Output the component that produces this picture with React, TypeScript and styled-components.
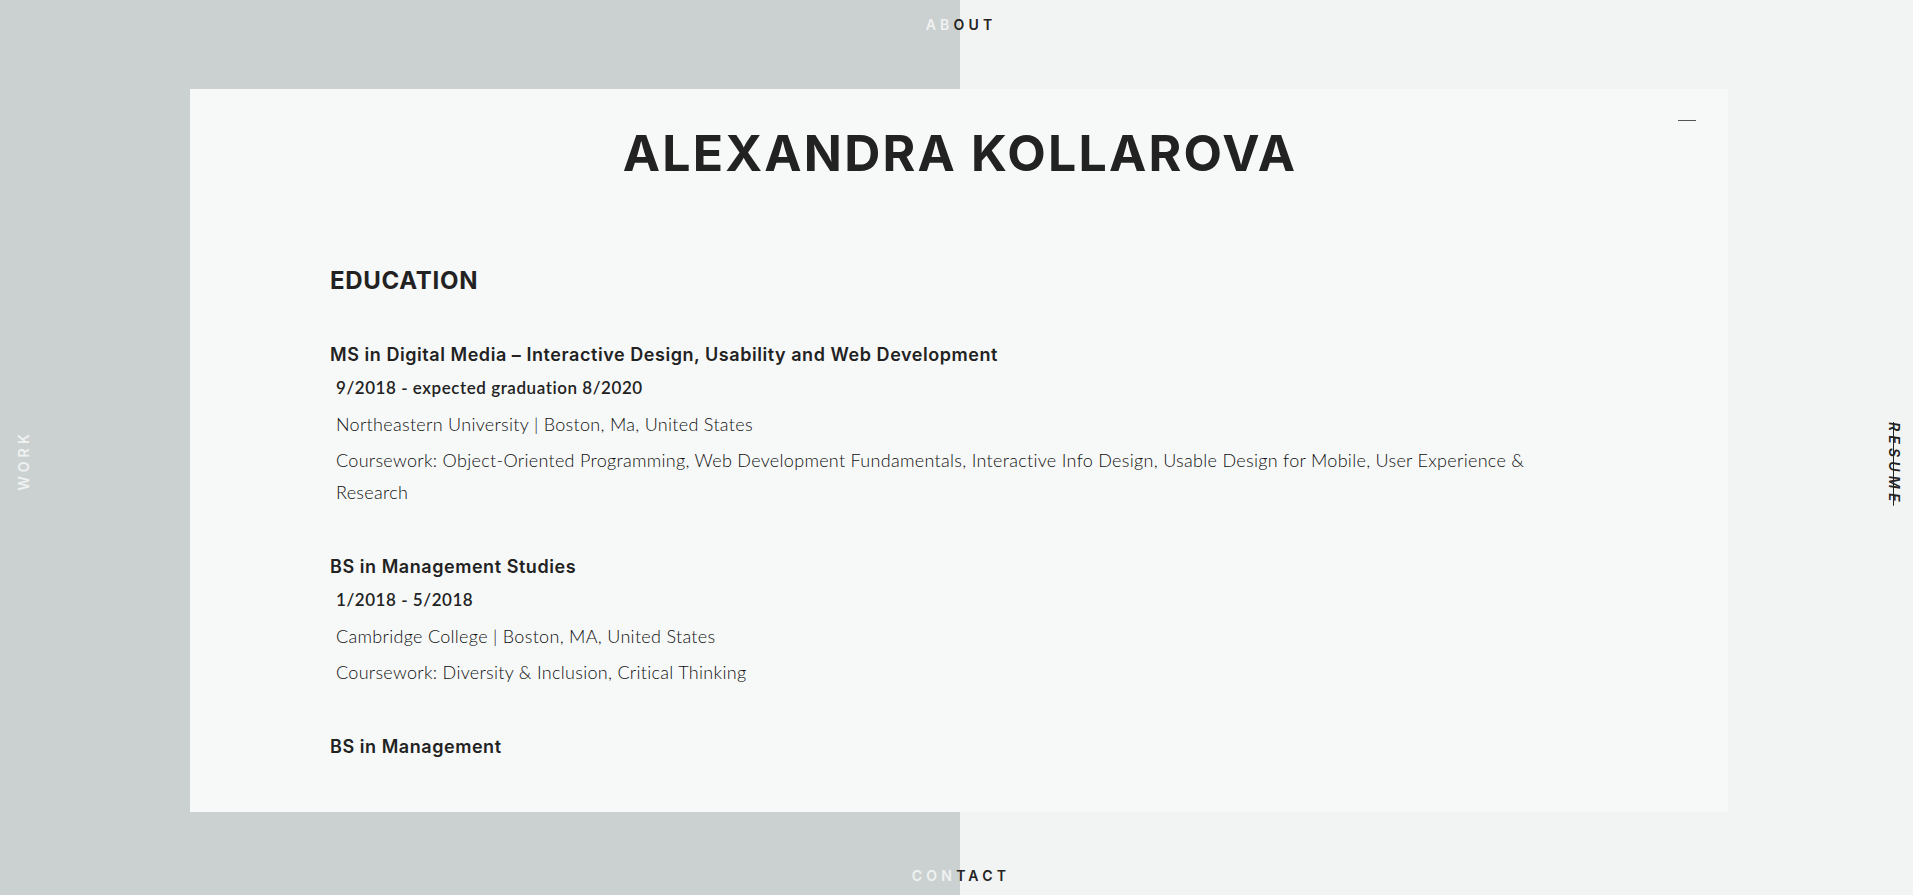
import React from "react";
import styled, { createGlobalStyle } from "styled-components";

const GlobalStyle = createGlobalStyle`
  html, body {
    margin: 0;
    padding: 0;
    height: 100%;
    overflow: hidden;
  }
  body {
    background: linear-gradient(to right, #cbd1d1 0, #cbd1d1 960px, #f2f3f3 960px, #f2f3f3 100%);
    font-family: "Lato", "Liberation Sans", sans-serif;
    -webkit-font-smoothing: antialiased;
  }
`;

const Page = styled.div`
  display: grid;
  grid-template-columns: 190px 1538px 1fr;
  grid-template-rows: 89px 723px 1fr;
  height: 100vh;
`;

const TopNav = styled.nav<{ $row: number; $pad: number }>`
  grid-column: 2;
  grid-row: ${(p) => p.$row};
  justify-self: center;
  padding-top: ${(p) => p.$pad}px;
  padding-left: 4px;
`;

const SideNav = styled.nav<{ $side: "left" | "right"; $offset: number }>`
  grid-row: 1 / 4;
  grid-column: ${(p) => (p.$side === "left" ? 1 : 3)};
  display: flex;
  align-items: center;
  justify-content: ${(p) => (p.$side === "left" ? "flex-start" : "flex-end")};
  padding-top: ${(p) => p.$offset}px;
  padding-left: ${(p) => (p.$side === "left" ? 17 : 0)}px;
  padding-right: ${(p) => (p.$side === "right" ? 12 : 0)}px;
`;

const NavLink = styled.a<{ $vertical?: "up" | "down"; $active?: boolean }>`
  font-family: "Inter", "Liberation Sans", sans-serif;
  font-weight: 600;
  font-size: 14px;
  line-height: 14px;
  letter-spacing: 4.2px;
  text-transform: uppercase;
  color: #222;
  text-decoration: ${(p) => (p.$active ? "line-through" : "none")};
  font-style: ${(p) => (p.$active ? "italic" : "normal")};
  cursor: pointer;
  writing-mode: ${(p) => (p.$vertical ? "vertical-rl" : "horizontal-tb")};
  transform: ${(p) => (p.$vertical === "up" ? "rotate(180deg)" : "none")};
`;

const Light = styled.span`
  color: #f0f2f2;
`;

const Card = styled.section`
  grid-column: 2;
  grid-row: 2;
  position: relative;
  background: #f7f9f9;
  display: flex;
  flex-direction: column;
  padding-top: 39px;
  box-sizing: border-box;
`;

const MinimizeButton = styled.button`
  position: absolute;
  top: 25px;
  right: 28px;
  padding: 6px 4px;
  border: none;
  background: transparent;
  cursor: pointer;
  display: flex;
`;

const Dash = styled.span`
  display: block;
  width: 18px;
  height: 1px;
  background: #555;
`;

const Name = styled.h1`
  margin: 0;
  padding-left: 2px;
  text-align: center;
  font-family: "Inter", "Liberation Sans", sans-serif;
  font-weight: 700;
  font-size: 50px;
  line-height: 1;
  letter-spacing: 2.2px;
  color: #222;
`;

const ScrollArea = styled.div`
  margin: 87px 99px 0 140px;
  height: 500px;
  overflow-y: scroll;
  padding-right: 30px;

  &::-webkit-scrollbar {
    width: 10px;
  }
  &::-webkit-scrollbar-track {
    background: #f2f3f3;
  }
  &::-webkit-scrollbar-thumb {
    background: #f2f3f3;
  }
`;

const ResumeSection = styled.section`
  display: flex;
  flex-direction: column;
  gap: 45px;
`;

const SectionTitle = styled.h2`
  margin: 0;
  font-family: "Inter", "Liberation Sans", sans-serif;
  font-weight: 700;
  font-size: 24px;
  line-height: 31px;
  letter-spacing: 0.7px;
  color: #222;
`;

const Degree = styled.article`
  display: flex;
  flex-direction: column;
  gap: 4px;
`;

const DegreeTitle = styled.h3`
  margin: 0;
  font-family: "Inter", "Liberation Sans", sans-serif;
  font-weight: 600;
  font-size: 18px;
  line-height: 27px;
  letter-spacing: 0.55px;
  color: #222;
`;

const Line = styled.p<{ $strong?: boolean }>`
  margin: 0;
  padding-left: 6px;
  font-family: "Lato", "Liberation Sans", sans-serif;
  font-weight: ${(p) => (p.$strong ? 600 : 300)};
  font-size: ${(p) => (p.$strong ? 17 : 18)}px;
  line-height: 32px;
  letter-spacing: ${(p) => (p.$strong ? 0.55 : 0.3)}px;
  color: ${(p) => (p.$strong ? "#222" : "#0f0f0f")};
`;

type DegreeData = {
  title: string;
  dates?: string;
  place?: string;
  coursework?: string;
};

const degrees: DegreeData[] = [
  {
    title: "MS in Digital Media – Interactive Design, Usability and Web Development",
    dates: "9/2018 - expected graduation 8/2020",
    place: "Northeastern University | Boston, Ma, United States",
    coursework:
      "Coursework: Object-Oriented Programming, Web Development Fundamentals, Interactive Info Design, Usable Design for Mobile, User Experience & Research",
  },
  {
    title: "BS in Management Studies",
    dates: "1/2018 - 5/2018",
    place: "Cambridge College | Boston, MA, United States",
    coursework: "Coursework: Diversity & Inclusion, Critical Thinking",
  },
  {
    title: "BS in Management",
  },
];

export default function App() {
  return (
    <>
      <GlobalStyle />
      <Page>
        <TopNav $row={1} $pad={14}>
          <NavLink>
            <Light>AB</Light>OUT
          </NavLink>
        </TopNav>

        <SideNav $side="left" $offset={26}>
          <NavLink $vertical="up">
            <Light>WORK</Light>
          </NavLink>
        </SideNav>

        <Card>
          <MinimizeButton aria-label="Minimize">
            <Dash />
          </MinimizeButton>
          <Name>ALEXANDRA KOLLAROVA</Name>
          <ScrollArea>
            <ResumeSection>
              <SectionTitle>EDUCATION</SectionTitle>
              {degrees.map((d) => (
                <Degree key={d.title}>
                  <DegreeTitle>{d.title}</DegreeTitle>
                  {d.dates && <Line $strong>{d.dates}</Line>}
                  {d.place && <Line>{d.place}</Line>}
                  {d.coursework && <Line>{d.coursework}</Line>}
                </Degree>
              ))}
            </ResumeSection>
          </ScrollArea>
        </Card>

        <SideNav $side="right" $offset={32}>
          <NavLink $vertical="down" $active>
            RESUME
          </NavLink>
        </SideNav>

        <TopNav $row={3} $pad={53}>
          <NavLink>
            <Light>CON</Light>TACT
          </NavLink>
        </TopNav>
      </Page>
    </>
  );
}
